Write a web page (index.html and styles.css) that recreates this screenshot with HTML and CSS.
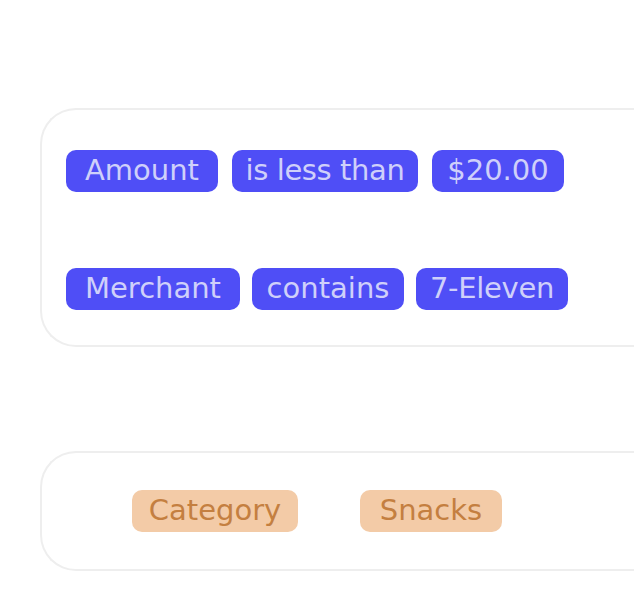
FILE: index.html
```html
<!DOCTYPE html>
<html>
<head>
<meta charset="utf-8">
<link rel="stylesheet" href="styles.css">
</head>
<body>
<div class="page">
  <div class="card rules">
    <div class="row row-one">
      <span class="pill blue pill-amount">Amount</span>
      <span class="pill blue pill-op">is less than</span>
      <span class="pill blue pill-value">$20.00</span>
    </div>
    <div class="row row-two">
      <span class="pill blue pill-merchant">Merchant</span>
      <span class="pill blue pill-contains">contains</span>
      <span class="pill blue pill-name">7-Eleven</span>
    </div>
  </div>
  <div class="card action">
    <div class="row row-action">
      <span class="pill orange pill-category">Category</span>
      <span class="pill orange pill-snacks">Snacks</span>
    </div>
  </div>
</div>
</body>
</html>
```

FILE: styles.css
```css
html, body {
  margin: 0;
  padding: 0;
  background: #ffffff;
  overflow: hidden;
}

.page {
  width: 634px;
  height: 592px;
  overflow: hidden;
  padding-left: 40px;
  box-sizing: border-box;
  font-family: "DejaVu Sans", "Noto Sans", sans-serif;
}

.card {
  width: 700px;
  border: 2px solid #eeeeee;
  border-right: none;
  border-radius: 36px 0 0 36px;
  box-sizing: border-box;
  display: flex;
  flex-direction: column;
}

.rules {
  margin-top: 108px;
  padding: 40px 0 35px 24px;
  gap: 76px;
}

.action {
  margin-top: 104px;
  padding: 37px 0 37px 90px;
}

.row {
  display: flex;
  gap: 12px;
}

.row-one {
  gap: 14px;
}

.row-action {
  gap: 62px;
}

.pill {
  display: inline-block;
  box-sizing: border-box;
  height: 42px;
  line-height: 41px;
  padding: 0 8px;
  border-radius: 10px;
  font-size: 29px;
  text-align: center;
  white-space: nowrap;
}

.pill-amount { width: 152px; }
.pill-op { width: 186px; letter-spacing: -0.4px; }
.pill-value { width: 132px; }
.pill-merchant { width: 174px; }
.pill-contains { width: 152px; }
.pill-name { width: 152px; letter-spacing: -0.3px; }
.pill-category { width: 166px; }
.pill-snacks { width: 142px; }

.blue {
  background: #4f4ef6;
  color: #cfd0fa;
}

.orange {
  background: #f3cba7;
  color: #c47f40;
}
```
